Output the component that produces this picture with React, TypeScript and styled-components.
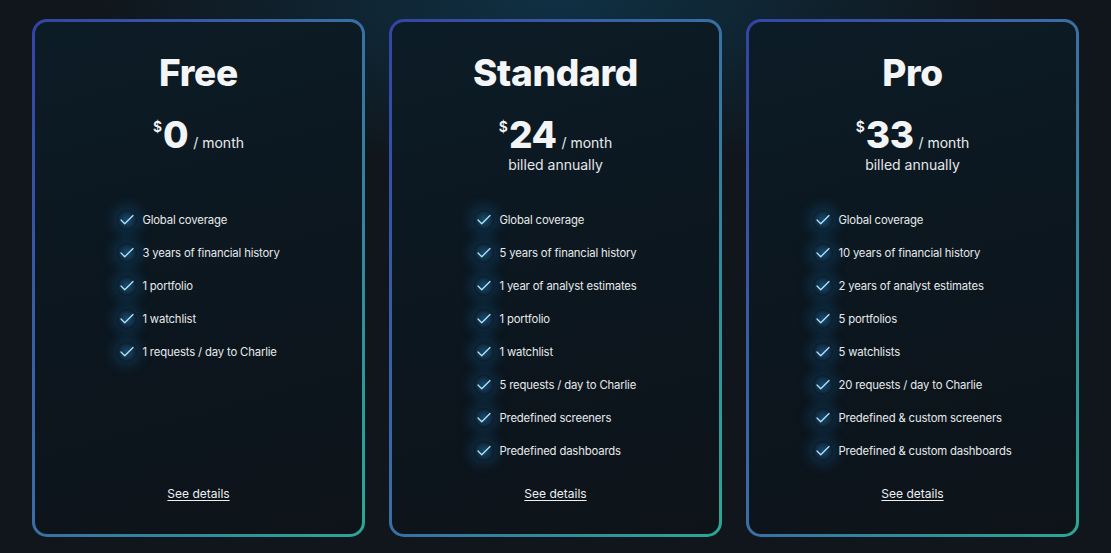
import React from "react";
import styled, { createGlobalStyle } from "styled-components";
import { Check } from "lucide-react";

const Global = createGlobalStyle`
  html, body { margin: 0; padding: 0; }
  body {
    background: #10161c;
    font-family: Inter, "Noto Sans", "Liberation Sans", sans-serif;
    color: #f2f4f5;
    width: 1111px;
    height: 553px;
    overflow: hidden;
  }
`;

const Page = styled.main`
  width: 1111px;
  height: 553px;
  box-sizing: border-box;
  padding: 19px 31px 16px 32px;
  display: flex;
  gap: 24px;
  background:
    radial-gradient(ellipse 460px 170px at 555px 0px, rgba(14, 70, 100, 0.55), rgba(14, 70, 100, 0) 100%),
    #10161c;
`;

const Card = styled.section`
  width: 333px;
  height: 518px;
  box-sizing: border-box;
  border: 3px solid transparent;
  border-radius: 15px;
  background:
    linear-gradient(165deg, #0c1c26 0%, #0c161e 55%, #0d1319 100%) padding-box,
    linear-gradient(to bottom right, #3444a6 0%, #3a6aa6 45%, #2aa894 100%) border-box;
  display: flex;
  flex-direction: column;
  align-items: center;
  padding-top: 28px;
`;

const Title = styled.h2`
  margin: 0;
  font-size: 37px;
  line-height: 46px;
  font-weight: 800;
  letter-spacing: -0.3px;
  color: #f4f5f6;
`;

const PriceBlock = styled.div`
  margin-top: 17px;
  height: 97px;
  display: flex;
  flex-direction: column;
  align-items: center;
`;

const PriceRow = styled.div`
  display: flex;
  align-items: baseline;
`;

const Currency = styled.span`
  font-size: 14px;
  font-weight: 600;
  align-self: flex-start;
  margin-top: 5px;
  margin-right: 1px;
`;

const Amount = styled.span`
  font-size: 37px;
  line-height: 44px;
  font-weight: 800;
  letter-spacing: -0.5px;
`;

const Period = styled.span`
  font-size: 14px;
  margin-left: 5px;
  color: #e9ecee;
`;

const Billed = styled.div`
  font-size: 14px;
  color: #e4e7ea;
  margin-top: -1px;
`;

const Features = styled.ul`
  list-style: none;
  margin: 0;
  padding: 0;
  display: flex;
  flex-direction: column;
  gap: 13px;
`;

const Feature = styled.li`
  display: flex;
  align-items: center;
  gap: 5px;
  height: 20px;
  font-size: 11.3px;
  letter-spacing: -0.15px;
  color: #e7eaec;
`;

const CheckMark = styled.span`
  width: 20px;
  height: 20px;
  display: inline-flex;
  align-items: center;
  justify-content: center;
  border-radius: 50%;
  color: #b8e4f7;
  background: radial-gradient(circle, rgba(30, 130, 200, 0.5) 0%, rgba(30, 120, 190, 0.2) 55%, rgba(30, 120, 190, 0) 75%);
  box-shadow: 0 0 12px 5px rgba(20, 110, 180, 0.25);
`;

const Spacer = styled.div`
  flex: 1;
`;

const Details = styled.a`
  font-size: 12px;
  color: #eef0f2;
  text-decoration: underline;
  text-underline-offset: 2px;
  margin-bottom: 33px;
  cursor: pointer;
`;

type Plan = {
  name: string;
  price: string;
  billed: boolean;
  features: string[];
};

const plans: Plan[] = [
  {
    name: "Free",
    price: "0",
    billed: false,
    features: [
      "Global coverage",
      "3 years of financial history",
      "1 portfolio",
      "1 watchlist",
      "1 requests / day to Charlie",
    ],
  },
  {
    name: "Standard",
    price: "24",
    billed: true,
    features: [
      "Global coverage",
      "5 years of financial history",
      "1 year of analyst estimates",
      "1 portfolio",
      "1 watchlist",
      "5 requests / day to Charlie",
      "Predefined screeners",
      "Predefined dashboards",
    ],
  },
  {
    name: "Pro",
    price: "33",
    billed: true,
    features: [
      "Global coverage",
      "10 years of financial history",
      "2 years of analyst estimates",
      "5 portfolios",
      "5 watchlists",
      "20 requests / day to Charlie",
      "Predefined & custom screeners",
      "Predefined & custom dashboards",
    ],
  },
];

export default function App() {
  return (
    <>
      <Global />
      <Page>
        {plans.map((p) => (
          <Card key={p.name}>
            <Title>{p.name}</Title>
            <PriceBlock>
              <PriceRow>
                <Currency>$</Currency>
                <Amount>{p.price}</Amount>
                <Period>/ month</Period>
              </PriceRow>
              {p.billed && <Billed>billed annually</Billed>}
            </PriceBlock>
            <Features>
              {p.features.map((f) => (
                <Feature key={f}>
                  <CheckMark>
                    <Check size={18} strokeWidth={1.7} />
                  </CheckMark>
                  {f}
                </Feature>
              ))}
            </Features>
            <Spacer />
            <Details>See details</Details>
          </Card>
        ))}
      </Page>
    </>
  );
}
